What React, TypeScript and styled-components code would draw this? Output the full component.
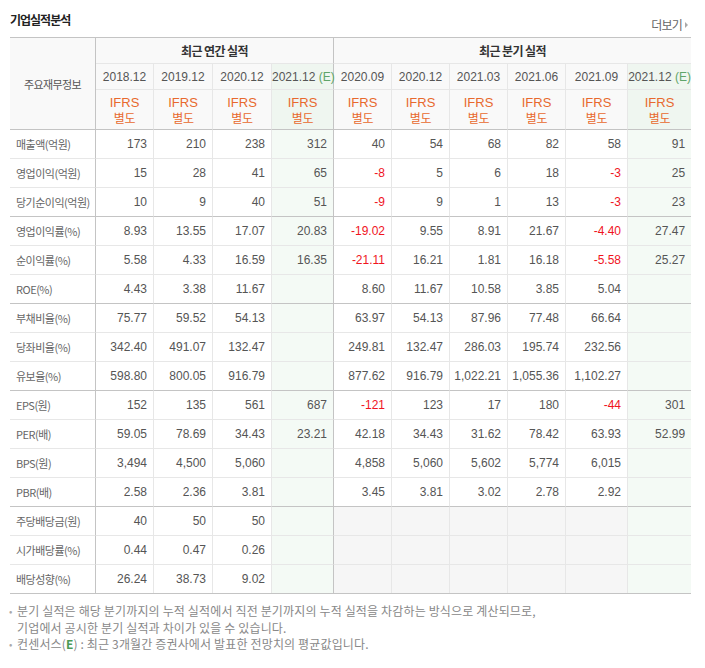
import React from "react";
import styled, { createGlobalStyle } from "styled-components";

const GlobalStyle = createGlobalStyle`
  html, body { margin: 0; padding: 0; background: #fff; }
  body { font-family: "Noto Sans CJK KR", "Noto Sans", sans-serif; color: #333; }
`;

const KR = `"Noto Sans CJK KR", "Noto Sans", sans-serif`;
const NUM = `"Liberation Sans", "Noto Sans CJK KR", sans-serif`;

const DARK = "#c4c4c4";
const LIGHT = "#e7e7e7";
const HEAD_BG = "#f9f9f9";
const EST_HEAD_BG = "#eff6f0";
const EST_BG = "#f4faf5";
const EMPTY_BG = "#f6f6f6";

const Page = styled.div`
  width: 681px;
  padding: 0 14px 0 10px;
`;

const TopBar = styled.div`
  display: flex;
  justify-content: space-between;
  align-items: flex-start;
  height: 37px;
`;

const Title = styled.h3`
  margin: 11px 0 0 0;
  font-family: ${KR};
  font-size: 12px;
  line-height: 18px;
  font-weight: 700;
  color: #222;
  letter-spacing: -1px;
`;

const More = styled.a`
  display: flex;
  align-items: center;
  gap: 3px;
  margin: 17px 3px 0 0;
  font-family: ${KR};
  font-size: 12px;
  line-height: 16px;
  color: #666;
  letter-spacing: -0.8px;
  text-decoration: none;
`;

const MoreArrow = styled.span`
  width: 0;
  height: 0;
  border-top: 3px solid transparent;
  border-bottom: 3px solid transparent;
  border-left: 3px solid #aaa;
`;

const Table = styled.table`
  width: 681px;
  table-layout: fixed;
  border-collapse: separate;
  border-spacing: 0;
  border-top: 1px solid ${DARK};
  border-bottom: 1px solid ${DARK};
`;

type EdgeProps = {
  $right?: "dark" | "light" | "none";
  $top?: "dark" | "light" | "none";
};

const edge = (v?: "dark" | "light" | "none") =>
  v === "dark" ? `1px solid ${DARK}` : v === "none" ? "none" : `1px solid ${LIGHT}`;

const HeadCorner = styled.th<EdgeProps>`
  background: ${HEAD_BG};
  border-right: ${(p) => edge(p.$right)};
  font-family: ${KR};
  font-size: 11px;
  font-weight: 400;
  color: #555;
  letter-spacing: -0.6px;
  padding: 0;
`;

const GroupHead = styled.th<EdgeProps>`
  height: 25px;
  padding: 0;
  background: ${HEAD_BG};
  border-right: ${(p) => edge(p.$right)};
  font-family: ${KR};
  font-size: 12px;
  font-weight: 700;
  color: #333;
  letter-spacing: -0.6px;
`;

const YearHead = styled.th<EdgeProps & { $est?: boolean }>`
  height: 25px;
  padding: 0;
  background: ${(p) => (p.$est ? EST_HEAD_BG : HEAD_BG)};
  border-top: 1px solid ${LIGHT};
  border-right: ${(p) => edge(p.$right)};
  font-family: ${NUM};
  font-size: 12px;
  font-weight: 400;
  color: #555;
  white-space: nowrap;
`;

const EstMark = styled.span`
  color: #5fa56a;
  font-family: ${NUM};
`;

const StdHead = styled.th<EdgeProps & { $est?: boolean }>`
  height: 39px;
  padding: 0;
  background: ${(p) => (p.$est ? EST_HEAD_BG : HEAD_BG)};
  border-top: 1px solid ${LIGHT};
  border-right: ${(p) => edge(p.$right)};
  font-family: ${KR};
  font-size: 12px;
  font-weight: 400;
  color: #e8692e;
  letter-spacing: -0.3px;
`;

const StdLine = styled.span<{ $latin?: boolean }>`
  display: block;
  height: 15px;
  line-height: 15px;
  font-family: ${(p) => (p.$latin ? NUM : KR)};
  font-size: ${(p) => (p.$latin ? "13px" : "12px")};
  letter-spacing: ${(p) => (p.$latin ? "0" : "-0.3px")};
`;

const Label = styled.th<EdgeProps>`
  height: 28px;
  padding: 0 0 0 6px;
  text-align: left;
  background: #fff;
  border-top: ${(p) => edge(p.$top)};
  border-right: ${(p) => edge(p.$right)};
  font-family: ${KR};
  font-size: 11px;
  font-weight: 400;
  color: #666;
  letter-spacing: -0.5px;
  white-space: nowrap;
`;

const Cell = styled.td<EdgeProps & { $bg?: "est" | "empty"; $neg?: boolean }>`
  height: 28px;
  padding: 0 6px 0 0;
  text-align: right;
  background: ${(p) => (p.$bg === "est" ? EST_BG : p.$bg === "empty" ? EMPTY_BG : "#fff")};
  border-top: ${(p) => edge(p.$top)};
  border-right: ${(p) => edge(p.$right)};
  font-family: ${NUM};
  font-size: 12px;
  color: ${(p) => (p.$neg ? "#f0141e" : "#555")};
  white-space: nowrap;
`;

const Notes = styled.ul`
  list-style: none;
  margin: 9px 0 0 0;
  padding: 0;
  font-family: ${KR};
  font-size: 12px;
  line-height: 16.5px;
  color: #888;
  letter-spacing: 0.15px;
`;

const Note = styled.li`
  display: flex;
`;

const Bullet = styled.span`
  flex: 0 0 8px;
  margin-left: -1px;
  color: #aaa;
  font-size: 10px;
`;

const NoteText = styled.span`
  flex: 1;
`;

const EstStrong = styled.b`
  color: #4b9a55;
  font-weight: 700;
`;

const WIDTHS = [86, 58, 59, 59, 62, 58, 58, 58, 58, 62, 63];
const ANNUAL = ["2018.12", "2019.12", "2020.12", "2021.12"];
const QUARTER = ["2020.09", "2020.12", "2021.03", "2021.06", "2021.09", "2021.12"];
const PERIODS = [...ANNUAL, ...QUARTER];
const EST_COLS = [3, 9];

type Row = { label: string; values: string[]; groupStart?: boolean; dividend?: boolean };

const ROWS: Row[] = [
  { label: "매출액(억원)", values: ["173", "210", "238", "312", "40", "54", "68", "82", "58", "91"] },
  { label: "영업이익(억원)", values: ["15", "28", "41", "65", "-8", "5", "6", "18", "-3", "25"] },
  { label: "당기순이익(억원)", values: ["10", "9", "40", "51", "-9", "9", "1", "13", "-3", "23"] },
  { label: "영업이익률(%)", groupStart: true, values: ["8.93", "13.55", "17.07", "20.83", "-19.02", "9.55", "8.91", "21.67", "-4.40", "27.47"] },
  { label: "순이익률(%)", values: ["5.58", "4.33", "16.59", "16.35", "-21.11", "16.21", "1.81", "16.18", "-5.58", "25.27"] },
  { label: "ROE(%)", values: ["4.43", "3.38", "11.67", "", "8.60", "11.67", "10.58", "3.85", "5.04", ""] },
  { label: "부채비율(%)", groupStart: true, values: ["75.77", "59.52", "54.13", "", "63.97", "54.13", "87.96", "77.48", "66.64", ""] },
  { label: "당좌비율(%)", values: ["342.40", "491.07", "132.47", "", "249.81", "132.47", "286.03", "195.74", "232.56", ""] },
  { label: "유보율(%)", values: ["598.80", "800.05", "916.79", "", "877.62", "916.79", "1,022.21", "1,055.36", "1,102.27", ""] },
  { label: "EPS(원)", groupStart: true, values: ["152", "135", "561", "687", "-121", "123", "17", "180", "-44", "301"] },
  { label: "PER(배)", values: ["59.05", "78.69", "34.43", "23.21", "42.18", "34.43", "31.62", "78.42", "63.93", "52.99"] },
  { label: "BPS(원)", values: ["3,494", "4,500", "5,060", "", "4,858", "5,060", "5,602", "5,774", "6,015", ""] },
  { label: "PBR(배)", values: ["2.58", "2.36", "3.81", "", "3.45", "3.81", "3.02", "2.78", "2.92", ""] },
  { label: "주당배당금(원)", groupStart: true, dividend: true, values: ["40", "50", "50", "", "", "", "", "", "", ""] },
  { label: "시가배당률(%)", dividend: true, values: ["0.44", "0.47", "0.26", "", "", "", "", "", "", ""] },
  { label: "배당성향(%)", dividend: true, values: ["26.24", "38.73", "9.02", "", "", "", "", "", "", ""] },
];

const rightEdge = (i: number): "dark" | "light" | "none" =>
  i === 3 ? "dark" : i === 9 ? "none" : "light";

export default function App() {
  return (
    <>
      <GlobalStyle />
      <Page>
        <TopBar>
          <Title>기업실적분석</Title>
          <More href="#">
            더보기
            <MoreArrow />
          </More>
        </TopBar>
        <Table>
          <colgroup>
            {WIDTHS.map((w, i) => (
              <col key={i} style={{ width: w }} />
            ))}
          </colgroup>
          <thead>
            <tr>
              <HeadCorner rowSpan={3} $right="dark">
                주요재무정보
              </HeadCorner>
              <GroupHead colSpan={4} $right="dark">
                최근 연간 실적
              </GroupHead>
              <GroupHead colSpan={6} $right="none">
                최근 분기 실적
              </GroupHead>
            </tr>
            <tr>
              {PERIODS.map((p, i) => {
                const est = EST_COLS.includes(i);
                return (
                  <YearHead key={i} $est={est} $right={rightEdge(i)}>
                    {p}
                    {est && <EstMark> (E)</EstMark>}
                  </YearHead>
                );
              })}
            </tr>
            <tr>
              {PERIODS.map((_, i) => (
                <StdHead key={i} $est={EST_COLS.includes(i)} $right={rightEdge(i)}>
                  <StdLine $latin>IFRS</StdLine>
                  <StdLine>별도</StdLine>
                </StdHead>
              ))}
            </tr>
          </thead>
          <tbody>
            {ROWS.map((row, r) => {
              const top = r === 0 || row.groupStart ? "dark" : "light";
              return (
                <tr key={r}>
                  <Label $top={top} $right="dark">
                    {row.label}
                  </Label>
                  {row.values.map((v, i) => {
                    const est = EST_COLS.includes(i);
                    const bg = est ? "est" : row.dividend && i > 3 ? "empty" : undefined;
                    return (
                      <Cell
                        key={i}
                        $top={top}
                        $right={rightEdge(i)}
                        $bg={bg}
                        $neg={v.startsWith("-")}
                      >
                        {v}
                      </Cell>
                    );
                  })}
                </tr>
              );
            })}
          </tbody>
        </Table>
        <Notes>
          <Note>
            <Bullet>•</Bullet>
            <NoteText>
              분기 실적은 해당 분기까지의 누적 실적에서 직전 분기까지의 누적 실적을 차감하는 방식으로 계산되므로,
              <br />
              기업에서 공시한 분기 실적과 차이가 있을 수 있습니다.
            </NoteText>
          </Note>
          <Note>
            <Bullet>•</Bullet>
            <NoteText>
              컨센서스(<EstStrong>E</EstStrong>) : 최근 3개월간 증권사에서 발표한 전망치의 평균값입니다.
            </NoteText>
          </Note>
        </Notes>
      </Page>
    </>
  );
}
